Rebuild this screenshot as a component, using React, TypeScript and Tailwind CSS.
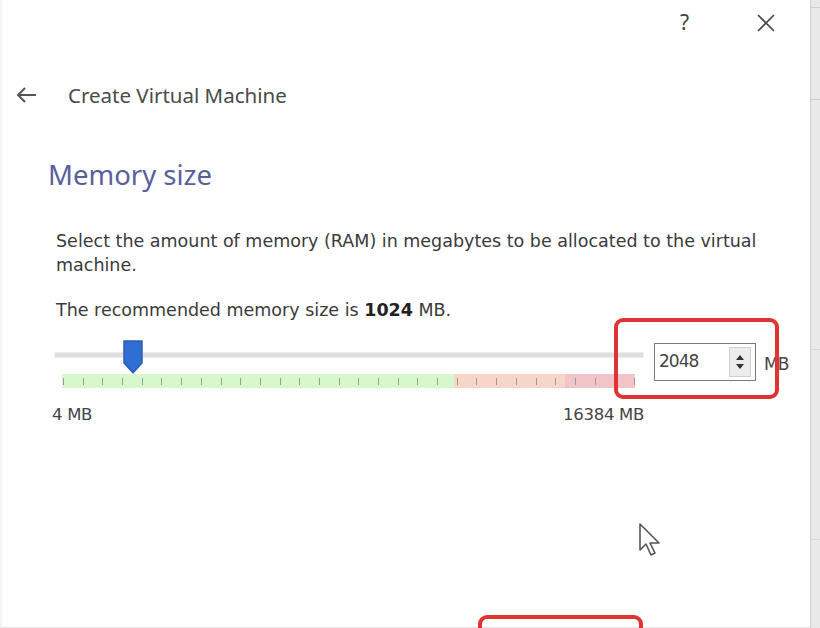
import React from "react";

const ticks = Array.from({ length: 30 }, (_, i) => i);

function Thumb() {
  return (
    <svg width="22" height="36" viewBox="0 0 22 36" className="block">
      <path d="M2 2 H20 V24 L11 34 L2 24 Z" fill="#2f6fd3" stroke="#2a5fb8" strokeWidth="1.5" />
    </svg>
  );
}

export default function App() {
  return (
    <div className="w-[820px] h-[628px] bg-white overflow-hidden relative flex" style={{ fontFamily: '"DejaVu Sans", sans-serif' }}>
      {/* main dialog */}
      <div className="w-[810px] h-full border-l-2 border-[#f1f4f4] border-b border-b-[#e6e6e6] flex flex-col">
        {/* title bar */}
        <div className="h-[48px] flex justify-end items-center pr-[34px] gap-[67px] text-[#444]" style={{ fontFamily: '"Noto Sans", sans-serif' }}>
          <span className="text-[21px] leading-none mt-[-4px]">?</span>
          <svg width="20" height="20" viewBox="0 0 20 20" className="mt-[-3px]">
            <path d="M2 2 L18 18 M18 2 L2 18" stroke="#444" strokeWidth="1.6" />
          </svg>
        </div>
        {/* header */}
        <div className="flex items-center h-[48px] mt-[23px] pl-[12px]" style={{ fontFamily: '"Noto Sans", sans-serif' }}>
          <svg width="24" height="20" viewBox="0 0 24 20">
            <path d="M22 10 H4 M11 3 L4 10 L11 17" stroke="#555" strokeWidth="2" fill="none" />
          </svg>
          <span className="ml-[30px] text-[20.5px] text-[#4a4a4a]">Create Virtual Machine</span>
        </div>
        {/* section title */}
        <div className="pl-[46px] mt-[42px] text-[27.5px] leading-none text-[#5b5e9c]" style={{ fontFamily: '"Noto Sans", sans-serif' }}>
          Memory size
        </div>
        {/* body */}
        <div className="pl-[54px] pr-[40px] mt-[40px] text-[17.5px] text-[#3a3a3a] leading-[24px]">
          Select the amount of memory (RAM) in megabytes to be allocated to the virtual machine.
        </div>
        <div className="pl-[54px] mt-[21px] text-[17.5px] text-[#3a3a3a] leading-[24px]">
          The recommended memory size is <b className="text-[#222]">1024</b> MB.
        </div>
        {/* slider row */}
        <div className="flex mt-[19px] pl-[50px]">
          <div className="w-[592px] flex flex-col">
            <div className="relative h-[54px]">
              <div className="absolute left-[2px] right-0 top-[11px] h-[6px] bg-[#e0e0e0] border border-[#ededed]" />
              <div className="absolute left-[70px] top-[-2px]">
                <Thumb />
              </div>
              <div className="absolute left-[10px] top-[33px] h-[14px] w-[582px] flex">
                <div className="w-[392px] h-full bg-[#d6f6cc]" />
                <div className="w-[111px] h-full bg-[#f7d6c9]" />
                <div className="w-[70px] h-full bg-[#f2c4c8]" />
              </div>
              <div className="absolute left-[11px] top-[37px] w-[572px] h-[7px] flex justify-between">
                {ticks.map((t) => (
                  <div key={t} className="w-px h-full bg-[#9a9a9a]" />
                ))}
              </div>
            </div>
            <div className="flex justify-between mt-[8px] text-[16.5px] text-[#444] tracking-[-0.3px]">
              <span>4 MB</span>
              <span>16384 MB</span>
            </div>
          </div>
          <div className="ml-[10px] mt-[2px] flex items-start">
            <div className="w-[102px] h-[38px] border border-[#7a7a7a] flex items-center justify-between pl-[4px] pr-[4px]">
              <span className="text-[17px] text-[#444] tracking-[-1px]">2048</span>
              <div className="w-[22px] h-[30px] bg-[#ececec] border border-[#d0d0d0] flex flex-col items-center justify-center gap-[4px]">
                <svg width="10" height="6" viewBox="0 0 10 6"><path d="M1 6 L5 1 L9 6 Z" fill="#333" /></svg>
                <svg width="10" height="6" viewBox="0 0 10 6"><path d="M1 0 L5 5 L9 0 Z" fill="#333" /></svg>
              </div>
            </div>
            <span className="ml-[8px] mt-[9px] text-[17px] text-[#444] tracking-[-1px]">MB</span>
          </div>
        </div>
      </div>
      {/* right gray strip */}
      <div className="w-[10px] h-full bg-[#e9e9e9] border-l border-[#cfcfcf] flex flex-col">
        <div className="h-[8px] border-b border-[#cdcdcd]" />
        <div className="h-[92px] border-b border-[#cdcdcd]" />
        <div className="h-[250px] border-b border-[#d6d6d6]" />
        <div className="h-[190px] border-b border-[#d6d6d6]" />
      </div>

      {/* red annotation boxes */}
      <div className="absolute left-[614px] top-[318px] w-[165px] h-[81px] border-[4px] border-[#e03434] rounded-[9px]" />
      <div className="absolute left-[478px] top-[615px] w-[165px] h-[40px] border-[4px] border-[#e03434] rounded-[9px]" />

      {/* mouse cursor */}
      <svg className="absolute left-[638px] top-[522px]" width="26" height="38" viewBox="0 0 26 38">
        <path d="M2 2 L2 28 L8 22 L13 33 L17 31 L12 21 L21 21 Z" fill="white" stroke="#555" strokeWidth="1.6" strokeLinejoin="round" />
      </svg>
    </div>
  );
}
